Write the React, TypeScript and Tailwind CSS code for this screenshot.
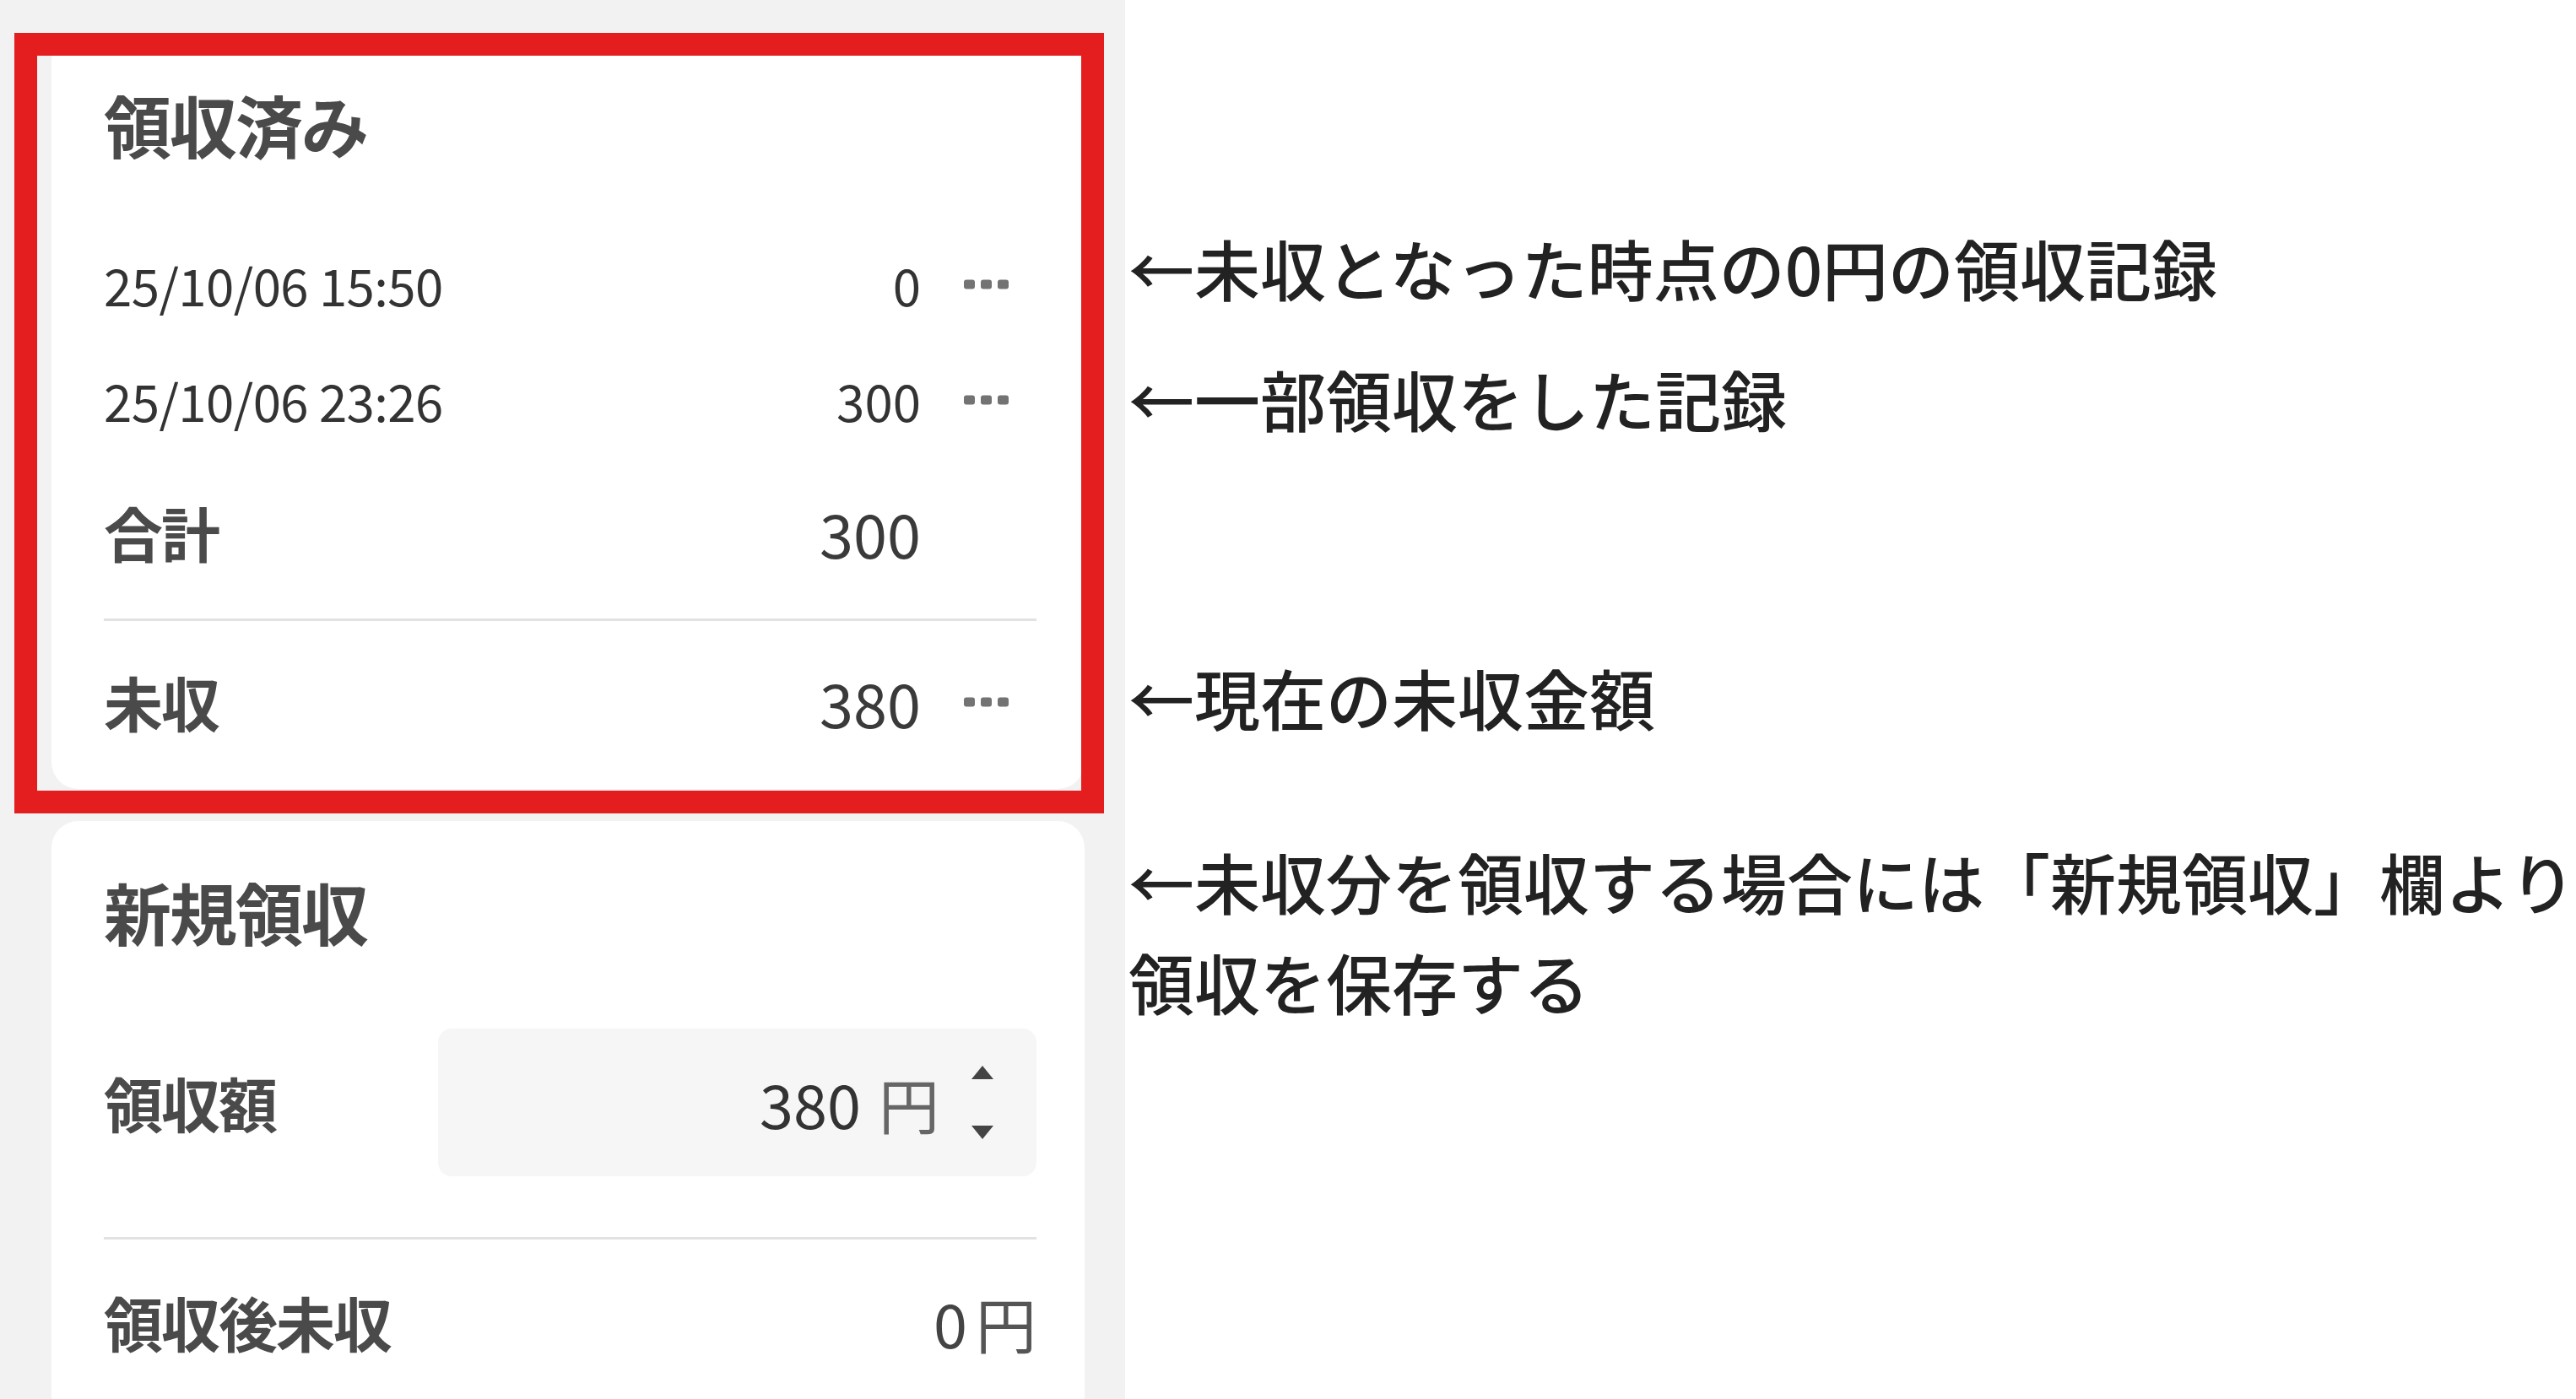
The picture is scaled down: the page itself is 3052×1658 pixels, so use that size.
import React from "react";

const Dots = () => (
  <svg width="54" height="12" viewBox="0 0 54 12" className="block">
    <rect x="0" y="0.5" width="13" height="11" rx="3" fill="#737373" />
    <rect x="20" y="0.5" width="13" height="11" rx="3" fill="#737373" />
    <rect x="40" y="0.5" width="13" height="11" rx="3" fill="#737373" />
  </svg>
);

const Spinner = () => (
  <svg width="30" height="90" viewBox="0 0 30 90" className="block">
    <path d="M15 1 L28 17 L2 17 Z" fill="#444" />
    <path d="M2 72 L28 72 L15 88 Z" fill="#444" />
  </svg>
);

function RecordRow({ date, value }: { date: string; value: string }) {
  return (
    <div className="flex items-center">
      <div className="flex-1 text-[60px] leading-none tracking-[-0.6px] text-[#333]">{date}</div>
      <div className="text-[60px] leading-none text-[#333]">{value}</div>
      <div className="ml-[30px] mr-[11px] flex w-[96px] justify-center">
        <Dots />
      </div>
    </div>
  );
}

export default function App() {
  return (
    <div className="flex h-[1658px] w-[3052px] overflow-hidden bg-white font-['Noto_Sans_CJK_JP','Noto_Sans',sans-serif]">
      {/* left app panel */}
      <div className="relative w-[1333px] shrink-0 bg-[#f2f2f2] pl-[61px] pr-[48px] pt-[40px]">
        {/* card 1 */}
        <div className="flex h-[895px] flex-col rounded-[32px] bg-white pl-[62px] pr-[57px] pt-[46px]">
          <div className="flex h-[120px] items-center text-[80px] font-bold leading-none tracking-[-2px] text-[#4a4a4a]">
            領収済み
          </div>
          <div className="mt-[62px] flex h-[138px] flex-col justify-center">
            <RecordRow date="25/10/06 15:50" value="0" />
          </div>
          <div className="flex h-[136px] flex-col justify-center">
            <RecordRow date="25/10/06 23:26" value="300" />
          </div>
          <div className="flex h-[178px] items-center">
            <div className="flex-1 text-[70px] font-bold leading-none tracking-[-2px] text-[#4a4a4a]">合計</div>
            <div className="text-[72px] leading-none text-[#3a3a3a]">300</div>
            <div className="ml-[30px] mr-[11px] w-[96px]" />
          </div>
          <div className="mt-[13px] h-[3px] bg-[#e2e2e2]" />
          <div className="flex h-[192px] items-center">
            <div className="flex-1 text-[70px] font-bold leading-none tracking-[-2px] text-[#4a4a4a]">未収</div>
            <div className="text-[72px] leading-none text-[#3a3a3a]">380</div>
            <div className="ml-[30px] mr-[11px] flex w-[96px] justify-center">
              <Dots />
            </div>
          </div>
        </div>

        {/* card 2 */}
        <div className="mt-[38px] flex h-[760px] flex-col rounded-[32px] bg-white pl-[62px] pr-[57px] pt-[46px]">
          <div className="flex h-[120px] items-center text-[80px] font-bold leading-none tracking-[-2px] text-[#4a4a4a]">
            新規領収
          </div>
          <div className="mt-[80px] flex h-[175px] items-center">
            <div className="w-[396px] text-[70px] font-bold leading-none tracking-[-2px] text-[#4a4a4a]">領収額</div>
            <div className="flex h-full flex-1 items-center justify-end rounded-[16px] bg-[#f6f6f6] pr-[49px]">
              <span className="text-[72px] leading-none text-[#333]">380</span>
              <span className="ml-[21px] text-[72px] leading-none text-[#666]">円</span>
              <div className="ml-[36px]">
                <Spinner />
              </div>
            </div>
          </div>
          <div className="mt-[72px] h-[3px] bg-[#e2e2e2]" />
          <div className="flex h-[196px] items-center">
            <div className="flex-1 text-[70px] font-bold leading-none tracking-[-2px] text-[#4a4a4a]">領収後未収</div>
            <span className="text-[72px] leading-none text-[#444]">0</span>
            <span className="ml-[10px] text-[72px] leading-none text-[#555]">円</span>
          </div>
        </div>

        {/* red highlight frame */}
        <div className="pointer-events-none absolute left-[17px] top-[39px] h-[925px] w-[1291px] border-[27px] border-[#e41d1f]" />
      </div>

      {/* annotations */}
      <div className="flex-1 pl-[4px] pt-[259px] text-[78px] font-medium leading-[117px] text-[#222] whitespace-nowrap">
        <div>←未収となった時点の0円の領収記録</div>
        <div className="mt-[38px]">←一部領収をした記録</div>
        <div className="mt-[237px]">←現在の未収金額</div>
        <div className="mt-[101px]">←未収分を領収する場合には「新規領収」欄より</div>
        <div className="mt-[2px]">領収を保存する</div>
      </div>
    </div>
  );
}
